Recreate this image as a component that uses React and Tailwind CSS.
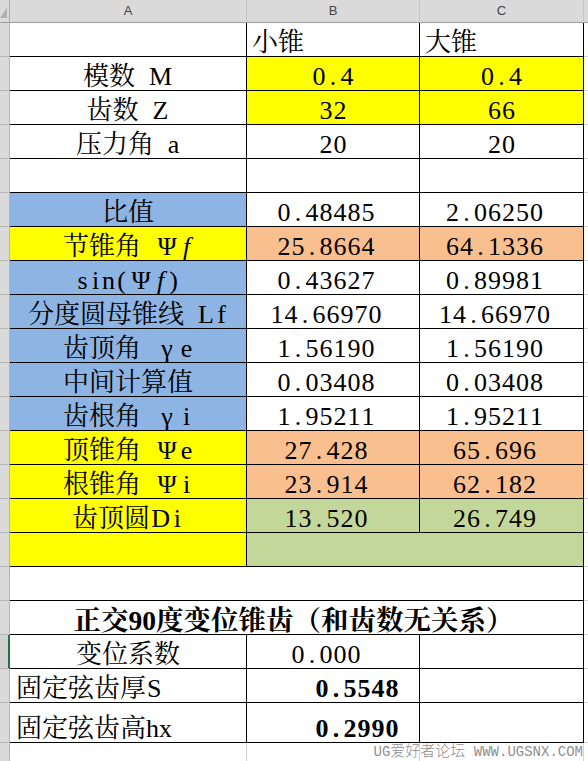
import React from 'react';

const HALF = 'inline-block w-[0.5em] text-center';
const FULL = 'inline-block w-[1em] text-center';
const NUM = 'inline-block w-[14px] text-center';

function S({ s, num }) {
  return Array.from(s).map((ch, i) => {
    if (ch === '~')
      return (
        <span key={i} className={HALF}>
          <i>f</i>
        </span>
      );
    const c = ch.charCodeAt(0);
    if (!num && c >= 65 && c <= 90)
      return (
        <span key={i} className="inline-block px-[1px]">
          {ch}
        </span>
      );
    if (c < 0x370)
      return (
        <span key={i} className={num ? NUM : HALF}>
          {ch === ' ' ? '\u00a0' : ch}
        </span>
      );
    if (c < 0x400)
      return (
        <span key={i} className={FULL}>
          {ch}
        </span>
      );
    return <span key={i}>{ch}</span>;
  });
}

function RowHead({ active }) {
  return (
    <div
      className={
        active
          ? 'w-[10px] shrink-0 bg-[#d2d2d2] border-b border-[#b4b4b4] border-r-2 border-r-[#217346]'
          : 'w-[10px] shrink-0 bg-[#dadada] border-b border-r border-[#b4b4b4]'
      }
    />
  );
}

function Row({ tall, active, children }) {
  return (
    <div className={tall ? 'flex h-[40px]' : 'flex h-[34px]'}>
      <RowHead active={active} />
      {children}
      <div className="w-[4px] shrink-0 border-b border-[#d4d4d4]" />
    </div>
  );
}

function Cell({ w, bg = 'bg-white', cls = 'justify-center', children }) {
  return (
    <div
      className={`${w} ${bg} ${cls} shrink-0 flex items-end border-b border-r border-black whitespace-nowrap leading-none`}
    >
      {children}
    </div>
  );
}

const A = 'w-[237px]';
const B = 'w-[173px]';
const C = 'w-[164px]';

const Y = 'bg-[#ffff00]';
const BL = 'bg-[#8db4e2]';
const OR = 'bg-[#fabf8f]';
const GR = 'bg-[#c4d79b]';

const calc = [
  ['比值', BL, '0.48485', '2.06250', 'bg-white'],
  ['节锥角 Ψ~', Y, '25.8664', '64.1336', OR],
  ['sin(Ψ~)', BL, '0.43627', '0.89981', 'bg-white'],
  ['分度圆母锥线 Lf', BL, '14.66970', '14.66970', 'bg-white'],
  ['齿顶角 γe', BL, '1.56190', '1.56190', 'bg-white'],
  ['中间计算值', BL, '0.03408', '0.03408', 'bg-white'],
  ['齿根角 γi', BL, '1.95211', '1.95211', 'bg-white'],
  ['顶锥角 Ψe', Y, '27.428', '65.696', OR],
  ['根锥角 Ψi', Y, '23.914', '62.182', OR],
  ['齿顶圆Di', Y, '13.520', '26.749', GR],
];

function HeadCell({ w, children }) {
  return (
    <div
      className={`${w} shrink-0 flex items-center justify-center border-r border-b border-r-[#c4c4c4] border-b-[#9e9e9e] text-[13px] text-[#444] font-['Liberation_Sans',sans-serif]`}
    >
      {children}
    </div>
  );
}

export default function App() {
  return (
    <div className="relative w-[588px] h-[761px] overflow-hidden bg-white text-black text-[26px] font-['Liberation_Serif','Noto_Serif_CJK_SC','Noto_Sans_CJK_SC',serif]">
      {/* column header */}
      <div className="flex h-[23px] bg-[#dadada]">
        <div className="w-[10px] shrink-0 border-r border-b border-r-[#a9a9a9] border-b-[#9e9e9e] relative">
          <svg width="9" height="22" className="absolute left-0 top-0">
            <polygon points="0,18 7,18 7,7" fill="#b2b2b2" />
          </svg>
        </div>
        <HeadCell w={A}>A</HeadCell>
        <HeadCell w={B}>B</HeadCell>
        <HeadCell w={C}>C</HeadCell>
        <div className="w-[4px] shrink-0 border-b border-[#9e9e9e]" />
      </div>

      <Row>
        <Cell w={A} />
        <Cell w={B} cls="justify-start pl-[5px]">
          <S s="小锥" />
        </Cell>
        <Cell w={C} cls="justify-start pl-[5px]">
          <S s="大锥" />
        </Cell>
      </Row>
      <Row>
        <Cell w={A}>
          <S s="模数 M" />
        </Cell>
        <Cell w={B} bg={Y}>
          <S s="0.4" num />
        </Cell>
        <Cell w={C} bg={Y}>
          <S s="0.4" num />
        </Cell>
      </Row>
      <Row>
        <Cell w={A}>
          <S s="齿数 Z" />
        </Cell>
        <Cell w={B} bg={Y}>
          <S s="32" num />
        </Cell>
        <Cell w={C} bg={Y}>
          <S s="66" num />
        </Cell>
      </Row>
      <Row>
        <Cell w={A}>
          <S s="压力角 a" />
        </Cell>
        <Cell w={B}>
          <S s="20" num />
        </Cell>
        <Cell w={C}>
          <S s="20" num />
        </Cell>
      </Row>
      <Row>
        <Cell w={A} />
        <Cell w={B} />
        <Cell w={C} />
      </Row>

      {calc.map(([label, lbg, b, c, vbg]) => (
        <Row key={label}>
          <Cell w={A} bg={lbg}>
            <S s={label} />
          </Cell>
          <Cell w={B} bg={vbg} cls="justify-center pr-[14px]">
            <S s={b} num />
          </Cell>
          <Cell w={C} bg={vbg} cls="justify-center pr-[14px]">
            <S s={c} num />
          </Cell>
        </Row>
      ))}

      <Row>
        <Cell w={A} bg={Y} />
        <Cell w="w-[337px]" bg={GR} />
      </Row>
      <Row>
        <Cell w="w-[574px]" />
      </Row>
      <Row>
        <Cell w="w-[574px]" cls="justify-center pr-[6px] font-bold text-[27.5px]">
          <S s="正交90度变位锥齿（和齿数无关系）" />
        </Cell>
      </Row>
      <Row active>
        <Cell w={A}>
          <S s="变位系数" />
        </Cell>
        <Cell w={B} cls="justify-center pr-[14px]">
          <S s="0.000" num />
        </Cell>
        <Cell w={C} />
      </Row>
      <Row>
        <Cell w={A} cls="justify-start pl-[6px]">
          <S s="固定弦齿厚S" />
        </Cell>
        <Cell w={B} cls="justify-end pr-[20px] font-bold">
          <S s="0.5548" num />
        </Cell>
        <Cell w={C} />
      </Row>
      <Row tall>
        <Cell w={A} cls="justify-start pl-[6px]">
          <S s="固定弦齿高hx" />
        </Cell>
        <Cell w={B} cls="justify-end pr-[20px] font-bold">
          <S s="0.2990" num />
        </Cell>
        <Cell w={C} />
      </Row>

      {/* last partial row */}
      <div className="relative flex h-[19px]">
        <div className="w-[10px] shrink-0 bg-[#dadada] border-r border-[#b4b4b4]" />
        <div className={`${A} shrink-0 border-r border-[#d4d4d4]`} />
        <div className={`${B} shrink-0 border-r border-[#d4d4d4]`} />
        <div className={`${C} shrink-0 border-r border-[#d4d4d4]`} />
        <div className="absolute right-[5px] bottom-[2px] flex items-baseline text-[#8f8f8f] whitespace-nowrap">
          <span className="text-[14px] leading-[16px] font-['Liberation_Mono',monospace]">UG</span>
          <span className="text-[15px] leading-[16px] font-['Noto_Sans_CJK_SC',sans-serif] font-light">爱好者论坛</span>
          <span className="text-[14px] leading-[16px] font-['Liberation_Mono',monospace]">&nbsp;WWW.UGSNX.COM</span>
        </div>
      </div>
    </div>
  );
}
